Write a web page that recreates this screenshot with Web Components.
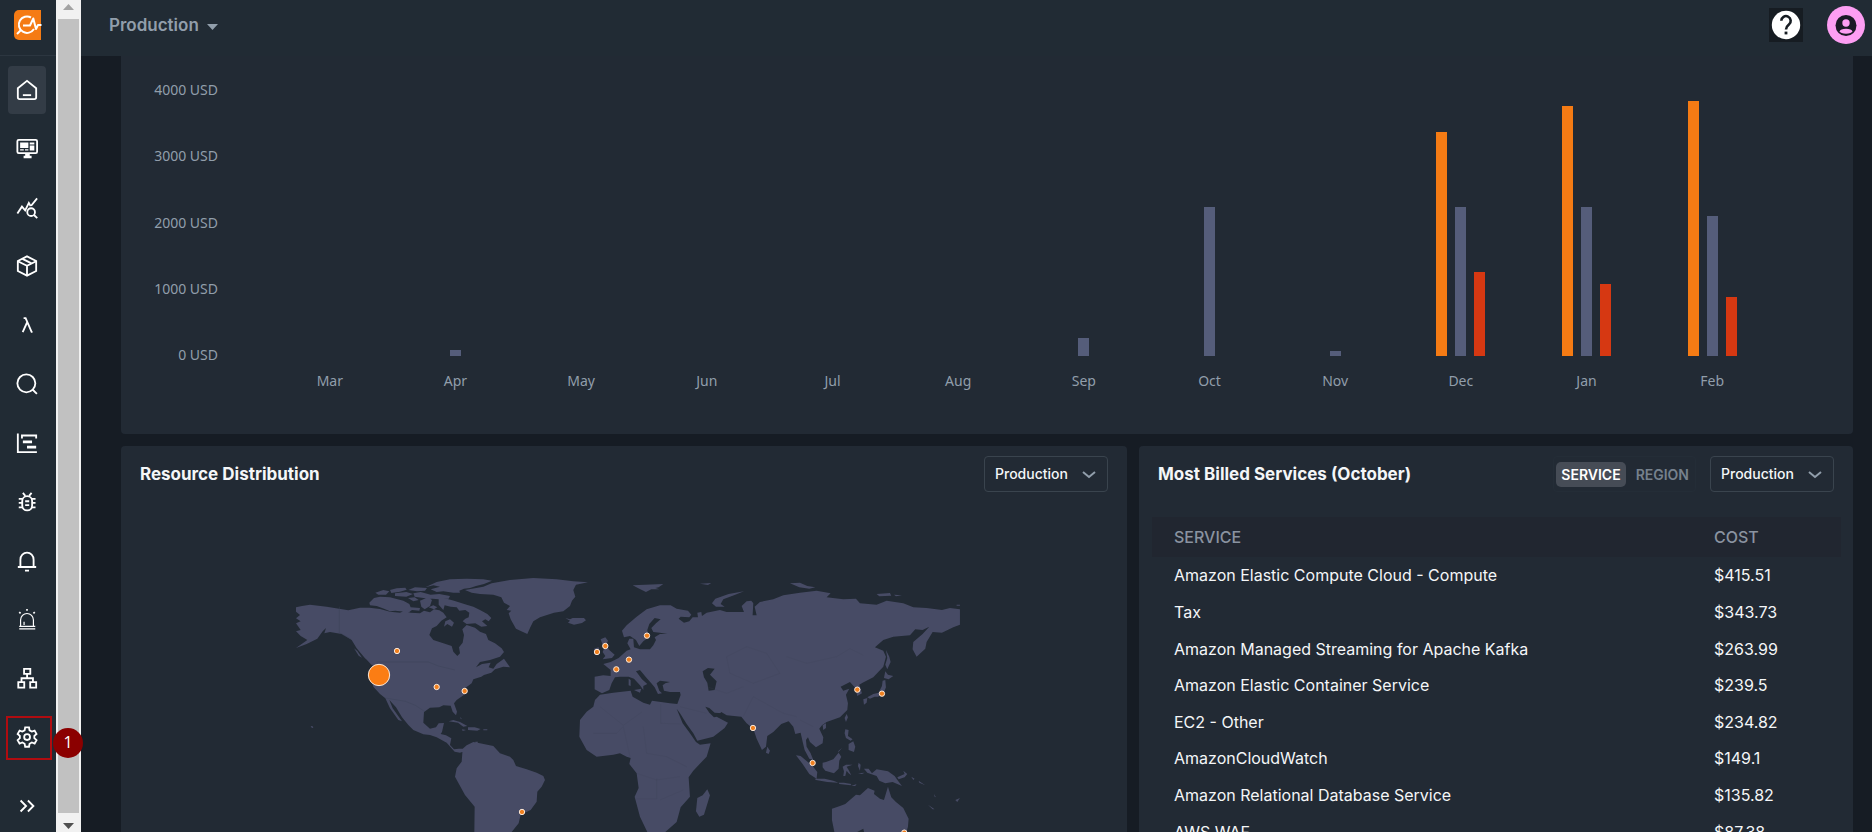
<!DOCTYPE html>
<html lang="en">
<head>
<meta charset="utf-8">
<meta name="viewport" content="width=device-width, initial-scale=1">
<title>Production - Cost overview</title>
<style>
  :root {
    --page: #161c24;
    --panel: #222a34;
    --bar: #212b34;
    --muted: #919eab;
    --text: #f4f6f8;
    --orange: #f57b14;
    --slate: #555d7a;
    --red: #d63812;
    --land: #474b65;
  }
  html, body { height: 100%; }
  body {
    margin: 0;
    background: var(--page);
    color: var(--text);
    font-family: Inter, "Liberation Sans", sans-serif;
    font-size: 16px;
    overflow: hidden;
  }
</style>
</head>
<body>
<cloud-app></cloud-app>

<script>
const define = (name, html, setup) => {
  customElements.define(name, class extends HTMLElement {
    connectedCallback() {
      if (this.shadowRoot) return;
      const t = document.createElement('template');
      t.innerHTML = typeof html === 'function' ? html(this) : html;
      this.attachShadow({ mode: 'open' }).append(t.content.cloneNode(true));
      if (setup) setup(this, this.shadowRoot);
    }
  });
};

/* ---------- icons ---------- */
const ICONS = {
  home: '<path d="M2 10 12 2l10 8V20a2 2 0 0 1-2 2H4a2 2 0 0 1-2-2z"/><path d="M7.500 17.600h9"/>',
  dashboard: '<rect x="1.500" y="2" width="21.500" height="14.500" rx="1.500"/><path fill="#fff" stroke="none" d="M4.500 5h9v6h-9zM15 5h5v2h-5zM15 8.300h5v5.300h-5zM4.500 12.200h4v1.400h-4zM9.800 12.200h3.700v1.400H9.800zM10 17h5v2.400h2V22H8.300v-2.600H10z"/>',
  trend: '<path d="m1.500 18 5-7.500 3.500 4L14 6.500l2 3.500M16.500 9.500l6.500-8"/><circle cx="16.500" cy="16.500" r="4.200"/><path d="m19.600 19.600 3.600 3.400"/>',
  cube: '<path d="m12 1.500 10 5v11l-10 5-10-5v-11z"/><path d="m2 6.800 10 5 10-5M12 11.800V22M7 4.200l10 5"/>',
  lambda: '<path d="M8.300 4.500h2.200L17 19.500h1M12.200 9 7.300 19.700"/>',
  search: '<circle cx="11.300" cy="11.300" r="9.800"/><path d="m18 18 4.800 4.800"/>',
  gantt: '<path d="M2 1.500v20.500h20.800M6.500 7V3.800h15.500v3.200" /><path stroke-width="2.800" d="M7.500 10.800h10M12 16.500h10"/>',
  bug: '<rect x="6.800" y="5.600" width="10.800" height="15.600" rx="5.400"/><path d="m7.500 2 2.700 3.300M17 2l-2.700 3.300M3 8.500h4.500M3 13h3.800M3 17.800h4.500M17 8.500h4.300M17.600 13h3.700M17 17.800h4.300M10 11.200h4.400M10 15.400h4.400"/>',
  bell: '<path d="M2 18.500h20M4.800 18.300V10.500a7.200 7.700 0 0 1 14.400 0v7.800M9.800 22.500h4.400"/>',
  siren: '<g stroke-width="1.300"><path d="M3.500 22.800h17.500M3.500 20h17.500M5 19.500V13a7 7 0 0 1 14 0v6.500M8.800 18.500V15"/><path stroke-width="1.800" d="M12 1v2M3.500 4.400l1.500 1.400M20.500 4.400 19 5.800"/></g>',
  network: '<path d="M8.800 2h6.800v5.500H8.800zM2.500 16.500h6.500v6H2.500zM15.500 16.500h6.500v6h-6.500zM12.100 7.500v4.800M6 16.500v-4.200h12.500v4.200"/>',
  gear: '<path d="M10 1.500h4.200l.6 3.200 2.500 1.400 3-1.100 2.100 3.700-2.400 2.100v2.500l2.400 2.100-2.100 3.700-3-1.100-2.500 1.400-.6 3.200H10l-.6-3.200-2.500-1.400-3 1.100-2.100-3.700 2.400-2.100v-2.500L1.800 8.700 3.900 5l3 1.100 2.500-1.400z"/><circle cx="12.100" cy="12.100" r="3.200"/>',
  expand: '<path d="m5 6 6 6-6 6M13 6l6 6-6 6"/>'
};
define('nav-icon', el => `
  <style>
    :host { display: block; width: 22px; height: 22px; }
    svg { display: block; width: 100%; height: 100%; fill: none; stroke: #fff; stroke-width: 2; }
  </style>
  <svg viewBox="0 0 24 24" aria-hidden="true">${ICONS[el.getAttribute('name')]}</svg>`);

define('brand-logo', `
  <style>:host { display: block; width: 28px; height: 30px; } svg { display: block; }</style>
  <svg width="28" height="30" viewBox="0 0 28 30" role="img" aria-label="Home">
    <path fill="#f57b14" d="M5 0h22v30H5a5 5 0 0 1-5-5V5a5 5 0 0 1 5-5z"/>
    <g fill="none" stroke="#fff" stroke-width="2" stroke-linejoin="round">
      <path d="M17 7.500A8.200 8.200 0 1 0 20 19"/>
      <path d="M9 15.500h7l3.300-7L22 19l2-4h3.500"/>
      <path d="m7 20-4 4"/>
    </g>
  </svg>`);

/* ---------- side navigation ---------- */
define('nav-item', el => `
  <style>
    :host { display: block; position: relative; }
    a { display: flex; align-items: center; justify-content: center; height: 48px; border-radius: 4px; }
    :host([active]) a { background: #333c46; }
  </style>
  <a href="#${el.getAttribute('icon')}" aria-label="${el.getAttribute('label')}"><nav-icon name="${el.getAttribute('icon')}"></nav-icon></a>
  <slot></slot>`);

define('step-marker', `
  <style>
    :host { position: absolute; top: 3px; left: -2px; width: 42px; height: 40px; border: 2px solid #b00c10; pointer-events: none; z-index: 2; }
    span { position: absolute; left: 45px; top: 10px; width: 30px; height: 30px; border-radius: 50%; background: #8b0000;
      color: #fff; font: 16px/28px "Open Sans", sans-serif; text-align: center; }
  </style>
  <span><slot></slot></span>`);

define('side-nav', `
  <style>
    :host { display: flex; flex-direction: column; width: 56px; background: var(--bar); }
    header { box-sizing: border-box; height: 56px; padding: 10px 14px; border-bottom: 1px solid #2c3640; }
    nav { flex: 1; display: flex; flex-direction: column; justify-content: space-between; padding: 10px 10px 0 8px; }
    footer { box-sizing: border-box; height: 71px; padding: 19px 10px 0 8px; }
    button { display: flex; align-items: center; justify-content: center; width: 100%; height: 51px; padding: 0; border: 0; background: none; }
  </style>
  <header><brand-logo></brand-logo></header>
  <nav>
    <nav-item active icon="home" label="Home"></nav-item>
    <nav-item icon="dashboard" label="Dashboards"></nav-item>
    <nav-item icon="trend" label="Insights"></nav-item>
    <nav-item icon="cube" label="Resources"></nav-item>
    <nav-item icon="lambda" label="Functions"></nav-item>
    <nav-item icon="search" label="Search"></nav-item>
    <nav-item icon="gantt" label="Traces"></nav-item>
    <nav-item icon="bug" label="Issues"></nav-item>
    <nav-item icon="bell" label="Alerts"></nav-item>
    <nav-item icon="siren" label="Incidents"></nav-item>
    <nav-item icon="network" label="Topology"></nav-item>
    <nav-item icon="gear" label="Settings"><step-marker>1</step-marker></nav-item>
  </nav>
  <footer><button aria-label="Expand menu"><nav-icon name="expand"></nav-icon></button></footer>`);

define('scroll-track', `
  <style>
    :host { display: flex; flex-direction: column; width: 25px; background: #f1f1f1; }
    i { flex: 1; margin: 0 2px; background: #c1c1c1; }
    svg { display: block; width: 25px; height: 19px; }
  </style>
  <svg viewBox="0 0 25 19"><path fill="#a3a3a3" d="M7 10h11l-5.500-6z"/></svg>
  <i></i>
  <svg viewBox="0 0 25 19"><path fill="#505050" d="M7 10h11l-5.500 6z"/></svg>`);

/* ---------- top bar ---------- */
define('top-bar', `
  <style>
    :host { display: flex; align-items: center; justify-content: space-between; box-sizing: border-box; height: 56px;
      padding: 0 7px 6px 28px; background: var(--bar); }
    label { display: flex; align-items: center; }
    select { appearance: none; border: 0; padding: 0; margin: 0; background: none; color: var(--muted); font: 600 17px/24px Inter, sans-serif; }
    label svg { width: 11px; height: 6px; margin: 4px 0 0 8px; pointer-events: none; }
    div { display: flex; align-items: center; gap: 24px; }
    button { display: block; padding: 0; border: 0; }
    button svg { display: block; }
    .help { width: 34px; height: 34px; background: #161c22; }
    .user { width: 38px; height: 38px; border-radius: 50%; background: #fd9ef3; }
  </style>
  <label>
    <select aria-label="Environment"><option>Production</option></select>
    <svg viewBox="0 0 11 6"><path fill="#919eab" d="M0 0h11L5.500 6z"/></svg>
  </label>
  <div>
    <button class="help" aria-label="Help">
      <svg width="34" height="34" viewBox="0 0 34 34"><circle cx="17" cy="17" r="14.200" fill="#fff"/>
        <path d="M12.300 12.800a4.700 4.700 0 1 1 7.600 3.700c-1.900 1.500-2.900 2.500-2.900 5" fill="none" stroke="#161c22" stroke-width="2.600"/>
        <rect x="15.600" y="23.600" width="2.800" height="2.800" fill="#161c22"/></svg>
    </button>
    <button class="user" aria-label="Account">
      <svg width="38" height="38" viewBox="0 0 38 38"><circle cx="19" cy="19.500" r="10.500" fill="#1b1a26"/>
        <circle cx="19" cy="17" r="3.700" fill="#fd9ef3"/>
        <ellipse cx="19" cy="25.200" rx="6.200" ry="2.500" fill="#fd9ef3"/></svg>
    </button>
  </div>`);

/* ---------- cards ---------- */
define('panel-card', `
  <style>
    :host { display: block; background: var(--panel); border-radius: 4px; min-width: 0; }
    header { display: flex; align-items: center; justify-content: space-between; padding: 10px 19px 0; }
    h2 { margin: 0; font-size: 17px; line-height: 24px; font-weight: 700; }
    .tools { display: flex; align-items: center; gap: 14px; }
  </style>
  <header><h2><slot name="title"></slot></h2><div class="tools"><slot name="tools"></slot></div></header>
  <slot></slot>`);

define('env-select', `
  <style>
    :host { display: block; position: relative; }
    select { appearance: none; box-sizing: border-box; width: 124px; height: 36px; margin: 0; padding: 0 30px 0 10px;
      border: 1px solid #3a444e; border-radius: 4px; background: transparent; color: var(--text);
      font: 500 14px/20px Inter, sans-serif; display: block; }
    svg { position: absolute; right: 12px; top: 15px; width: 14px; height: 8px; fill: none; stroke: var(--muted); stroke-width: 2; pointer-events: none; }
  </style>
  <select aria-label="Environment"><option>Production</option></select>
  <svg viewBox="0 0 14 8"><path d="m1 1 6 5 6-5"/></svg>`);

define('segment-switch', `
  <style>
    :host { display: flex; align-items: center; box-sizing: border-box; height: 36px; padding: 0 2px; border-radius: 4px; border: 1px solid #242d37; }
    button { height: 25px; margin: 0; padding: 0 5px; border: 0; border-radius: 5px; background: none; color: #76818d;
      font: 600 14px/25px Inter, sans-serif; }
    button + button { padding: 0 4px 0 10px; }
    button[aria-pressed=true] { background: #464c56; color: #fff; }
  </style>
  <button aria-pressed="true">SERVICE</button><button aria-pressed="false">REGION</button>`);

/* ---------- monthly cost chart ---------- */
const MONTHS = [
  ['Mar'], ['Apr', 0, 90, 0], ['May'], ['Jun'], ['Jul'], ['Aug'], ['Sep', 0, 265, 0], ['Oct', 0, 2245, 0],
  ['Nov', 0, 70, 0], ['Dec', 3365, 2245, 1265], ['Jan', 3765, 2245, 1090], ['Feb', 3840, 2110, 890]
];
define('cost-chart', `
  <style>
    :host { display: flex; gap: 49px; box-sizing: border-box; padding: 24px 78px 43px 0; background: var(--panel); border-radius: 0 0 4px 4px;
      color: var(--muted); font: 14px/20px "Noto Sans", sans-serif; }
    .axis { display: flex; flex-direction: column; justify-content: space-between; width: 97px; height: 285px; text-align: right; }
    .plot { flex: 1; display: grid; grid-template-columns: repeat(12, 1fr); }
    .bars { display: grid; grid-template-columns: 11px 11px 11px; gap: 8px; justify-content: center; align-items: end; height: 267px; padding-top: 9px; }
    .month { text-align: center; margin-top: 15px; }
    .a { background: var(--orange); } .b { background: var(--slate); } .c { background: var(--red); }
  </style>
  <div class="axis"><span>4000 USD</span><span>3000 USD</span><span>2000 USD</span><span>1000 USD</span><span>0 USD</span></div>
  <div class="plot">${MONTHS.map(([m, ...v]) => `
    <div><div class="bars">${['a', 'b', 'c'].map((k, i) => `<div class="${k}" style="height:${Math.round((v[i] || 0) * 266 / 4000)}px"></div>`).join('')}</div>
    <div class="month">${m}</div></div>`).join('')}
  </div>`);

/* ---------- world map ---------- */
const WEST = `
M48 142L66 138 90 134 140 140 205 151 240 143 268 143 300 147 330 155 360 158 372 153 392 158 420 160 432 152 450 157 462 148 478 151 490 158 500 172 484 182 470 198 456 205 448 225 460 240 490 250 515 258 520 275 532 288 540 280 537 262 548 248 552 225 547 208 560 195 585 203 600 215 618 222 625 240 645 250 665 265 672 276 660 290 630 300 600 306 588 322 606 312 632 308 626 322 640 326 650 312 672 296 690 322 670 320 645 328 634 338 612 345 604 350 580 358 575 370 555 385 556 402 530 420 522 430 531 455 528 466 518 455 512 437 490 436 478 442 450 443 432 456 430 488 450 506 468 502 476 490 492 489 486 516 482 522 498 526 514 535 510 555 522 568 536 566 548 566 553 574 540 578 524 575 500 548 470 532 450 525 430 523 400 510 385 495 366 472 348 442 328 420 338 445 366 484 355 480 330 445 316 415 300 402 280 380 268 345 278 315 255 295 230 265 215 240 185 222 150 216 133 220 138 204 128 214 112 236 80 252 48 264 82 240 62 228 48 214 62 210 48 190 62 184 48 175 60 165 48 155Z
M222 265l10 8 14 20-10-6zM252 290l18 10 16 16-12-2z
M92 498l6 1 2 5-5-1z
M268 128L282 114 300 110 330 112 370 122 388 132 392 142 420 144 418 152 396 150 388 156 360 154 346 152 330 154 312 146 290 138 270 136Z
M286 98L310 90 328 94 318 104 295 104ZM330 90l20-5 26-2 4 6-20 6-26 4zM345 100l34-4 20 6-20 8-34-2zM385 90l20-8 36 2-6 8-24 2zM400 100l22-4 30 8 26-2 32 6-4 8-30 2-46-4-26-4zM384 114l20-2 12 8-16 4zM420 122l24-10 12 8-6 18-16 10-10-8zM446 142l14-6 12 6-10 6z
M436 82L470 66 510 58 560 56 610 58 636 62 612 72 588 78 570 84 552 86 538 92 540 98 520 98 490 94 470 96 452 88 480 80 460 76Z
M476 118L500 116 522 122 560 134 580 140 600 150 622 162 634 174 626 184 616 178 606 184 622 198 604 200 586 190 560 192 548 184 556 176 566 172 568 158 556 150 538 152 530 142 512 140 494 136 490 150 476 134ZM496 184l14-6 12 10-6 12-14-8-10 8z
M555 90L610 80 635 70 690 60 760 54 830 58 880 64 924 67 888 74 880 90 886 110 876 122 870 138 850 154 822 158 780 172 760 184 750 204 742 222 724 214 708 206 692 178 686 160 694 152 680 150 690 138 672 128 664 112 640 104 600 102 575 98Z
M856 174l14 4 8-4 34 0 6 7-12 8-24 5-18-6 6-6z
M506 484L520 480 540 486 562 498 550 500 534 488ZM564 502l20 0 18 5-10 5-28-2zM546 508l12 2-10 3zM610 508h12v3h-12zM540 470l6 8-4-2z
M548 566L560 556 580 546 600 550 640 558 660 580 690 590 700 600 708 618 740 628 770 638 790 648 795 660 785 680 772 695 770 725 752 750 722 764 716 790 695 816 690 840 660 900 582 900 584 740 555 705 525 650 530 625 545 605Z
M586 545h8l-4 14z`;
const EAST = `
M60 480L80 455 100 440 105 420 120 404 160 398 212 392 218 410 250 428 270 434 276 422 330 430 352 432 362 405 360 396 330 396 312 392 308 376 316 370 330 366 318 362 330 330 345 326 350 335 374 322 398 354 378 362 360 368 342 360 330 366 300 362 290 370 298 392 306 400 294 402 284 382 274 370 258 352 240 330 228 334 246 358 262 372 250 378 250 390 240 376 222 356 206 350 180 350 165 352 155 370 148 390 126 400 104 388 104 350 130 346 152 348 152 330 130 312 152 306 176 294 200 272 212 268 202 250 208 236 220 236 222 262 240 268 270 268 280 256 288 240 284 232 300 222 322 222 300 218 280 216 274 204 288 190 302 178 284 174 268 192 262 210 266 232 250 244 238 258 228 240 210 228 192 232 186 212 200 196 230 170 260 148 300 136 332 136 350 146 384 152 394 164 388 172 362 170 356 176 372 188 388 184 398 172 414 172 412 158 424 156 426 168 440 158 480 150 500 156 552 156 545 138 560 124 574 122 580 130 578 166 590 166 584 140 600 126 640 118 670 106 720 98 770 92 812 100 800 112 850 118 888 116 900 130 950 134 980 122 1030 130 1060 142 1100 144 1146 150 1170 144 1200 148 1200 194 1180 202 1146 218 1118 216 1100 246 1096 266 1070 290 1058 268 1060 246 1088 222 1108 200 1088 210 1066 208 1050 226 1000 230 970 240 945 262 970 272 978 290 970 320 940 352 908 368 898 374 906 400 892 408 886 384 870 366 842 380 850 392 868 386 858 404 864 430 862 450 840 472 800 486 786 496 778 506 790 532 788 550 768 562 750 546 744 532 738 540 740 560 752 580 760 600 748 596 734 570 728 545 722 518 706 522 700 500 686 484 664 492 640 516 622 528 618 560 606 570 590 536 580 506 560 490 544 470 500 466 484 456 470 470 504 488 494 504 460 530 412 542 400 520 380 492 360 460 350 446 368 490 390 520 408 546 420 554 452 550 440 590 400 632 386 652 390 710 362 742 350 786 316 816 300 850 270 850 262 816 240 770 224 710 236 684 230 640 208 612 212 594 200 590 180 580 160 584 110 590 80 570 58 530Z
M122 238l14-6 8 10-6 14 10 14 16 14-8 10-28 4 8-10-8-12 4-10zM102 266l14-4 4 18-16 6z
M218 76l92-4-14 10-10 2 12 4-24 0-16 8-20-10zM420 71l34-2-10 6zM456 130l10-14 40-14 46-8-30 12-32 12-8 14 12 8-26 0zM690 70l30-2 22 10 24 4-18 4-30-4zM950 102l40-3 4 8-36 2zM1002 104l24 2-18 3zM1190 134h10v3h-10z
M978 270l10 20 4 16-10 22-6-14 6-20zM976 334l8 10 16 4-14 10-14-4zM976 360l2 22-8 20-16 8-10 0-14 6-8-4 18-10 16-4 10-20 2-16zM910 418l12-4-2 14-8 6z
M860 462l4 10-6 14-4-12zM788 496l10-6 0 14-8 6zM856 508l10 2-2 18 14 10-6 4-14-8-4-14zM866 552l14-8 6 16-4 16-16-6zM846 564l-12 14 2-6z
M622 560l8 12-4 10-8-4z
M708 586l14 2 36 30 14 18-2 20-22-14-20-30zM764 656l30 0 26 6 16 6-34-2-34-6zM836 668l16 0 22 4-2 4-34-4zM874 678l16-6-4 6z
M788 608l10-2 22-8 16-20 8 12-6 12-2 24-14 14-26-8-8-10zM848 620l10-6 20 0-18 6 6 10 8 16-8-6-6-8-4 16-6 0 2-14zM896 608l6 6-2 18-6-14zM894 640l20-2-8 4z
M912 626l14 0 10 14 14-12 34 6 20 14 10 14 12 16-28-12-22 4-18-8-8-14-28-10zM1012 652l22-10-4-10 12 10-8 10-18 6zM1054 650l10 6-4 4zM1076 662l20 14-18-8zM1104 734l20 14-6 0zM1122 702l6 10-4-2zM1186 720l14-6-8 12z
M442 688l8 18-18 58-14 6-10-16 4-40 16-8zM206 356l6 4 0 18-6-2zM222 390l22-4-4 12z
M816 746L840 738 856 732 888 704 900 706 924 684 944 692 942 702 960 716 972 720 984 680 994 712 1008 726 1030 744 1046 776 1044 800 1030 850 920 850 910 806 830 850 816 780Z`;
const dot = (x, y) => `<circle cx="${x}" cy="${y}" r="8"/>`;
define('world-map', `
  <style>
    :host { display: block; width: 66%; margin-left: 175px; padding-top: 86px; }
    svg { display: block; width: 100%; }
    .land { fill: var(--land); }
    .sea { fill: var(--panel); }
    .line { fill: none; stroke: #3b4256; stroke-width: 2; }
    .pins { fill: #f0801f; stroke: #fbe9da; stroke-width: 3; }
  </style>
  <svg viewBox="48 54 1992 900" role="img" aria-label="Resources by region">
    <path class="land" d="${WEST}"/>
    <path class="line" stroke-opacity=".6" d="M178 140v78L212 236M290 306h155l30 12 50 12M316 414l60 10 30 12 30 20"/>
    <g transform="translate(840 0)">
      <path class="land" d="${EAST}"/>
      <path class="sea" d="M428 334L444 324 464 326 450 344 470 364 464 390 446 392 442 368 432 352ZM436 440L448 444 464 458 486 460 484 468 462 472 448 458Z"/>
      <path class="line" stroke-opacity=".3" d="M302 432v58l60 2M120 440l70 56 56-40M100 520h70l20-20M190 500l20 90M250 500l10 80 60 10 60 30M230 640l60 20 70-10M230 716h60v-60M300 720l70-30M360 440l80 20M440 380l60 20 50-20M500 290l60-30 60 20 40 60-80 30-70-30zM680 290l60 20 90-20 40-24 40 20M550 470l30-60 90 50 40 10M720 480l40 20"/>
    </g>
    <g class="pins">
      <circle cx="297" cy="345" r="32" fill="#fb7d14"/>
      ${[[351,273],[470,381],[554,393],[726,756],[976,258],[951,276],[1047,299],[1009,328],[1101,227],[1732,389],[1806,401],[1419,504],[1598,609],[1873,818]].map(p => dot(...p)).join('')}
    </g>
  </svg>`);

/* ---------- billed services ---------- */
const ROWS = [
  ['Amazon Elastic Compute Cloud - Compute', '$415.51'], ['Tax', '$343.73'],
  ['Amazon Managed Streaming for Apache Kafka', '$263.99'], ['Amazon Elastic Container Service', '$239.5'],
  ['EC2 - Other', '$234.82'], ['AmazonCloudWatch', '$149.1'],
  ['Amazon Relational Database Service', '$135.82'], ['AWS WAF', '$87.38']
];
define('billed-table', `
  <style>
    :host { display: block; padding: 25px 12px 24px 13px; }
    table { width: 100%; height: 333px; border-collapse: collapse; table-layout: fixed; }
    th, td { padding: 0 22px; text-align: left; font-size: 16px; line-height: 20px; white-space: nowrap; }
    th { height: 40px; background: #212630; color: #8a93a0; font-weight: 500; }
    th:last-child { width: 105px; }
    td { height: 36px; font-weight: 400; }
  </style>
  <table>
    <thead><tr><th scope="col">SERVICE</th><th scope="col">COST</th></tr></thead>
    <tbody>${ROWS.map(r => `<tr><td>${r[0]}</td><td>${r[1]}</td></tr>`).join('')}</tbody>
  </table>`);

/* ---------- page ---------- */
define('cloud-app', `
  <style>
    :host { display: flex; height: 100vh; }
    .page { flex: 1; min-width: 0; display: flex; flex-direction: column; }
    main { flex: 1; min-height: 0; overflow: hidden; padding: 0 19px 0 40px; }
    .grid { display: grid; grid-template-columns: 1.409fr 1fr; gap: 12px; margin-top: 12px; }
  </style>
  <side-nav></side-nav>
  <scroll-track aria-hidden="true"></scroll-track>
  <div class="page">
    <top-bar></top-bar>
    <main>
      <cost-chart></cost-chart>
      <div class="grid">
        <panel-card>
          <span slot="title">Resource Distribution</span>
          <env-select slot="tools"></env-select>
          <world-map></world-map>
        </panel-card>
        <panel-card>
          <span slot="title">Most Billed Services (October)</span>
          <segment-switch slot="tools"></segment-switch>
          <env-select slot="tools"></env-select>
          <billed-table></billed-table>
        </panel-card>
      </div>
    </main>
  </div>`);
</script>
</body>
</html>
